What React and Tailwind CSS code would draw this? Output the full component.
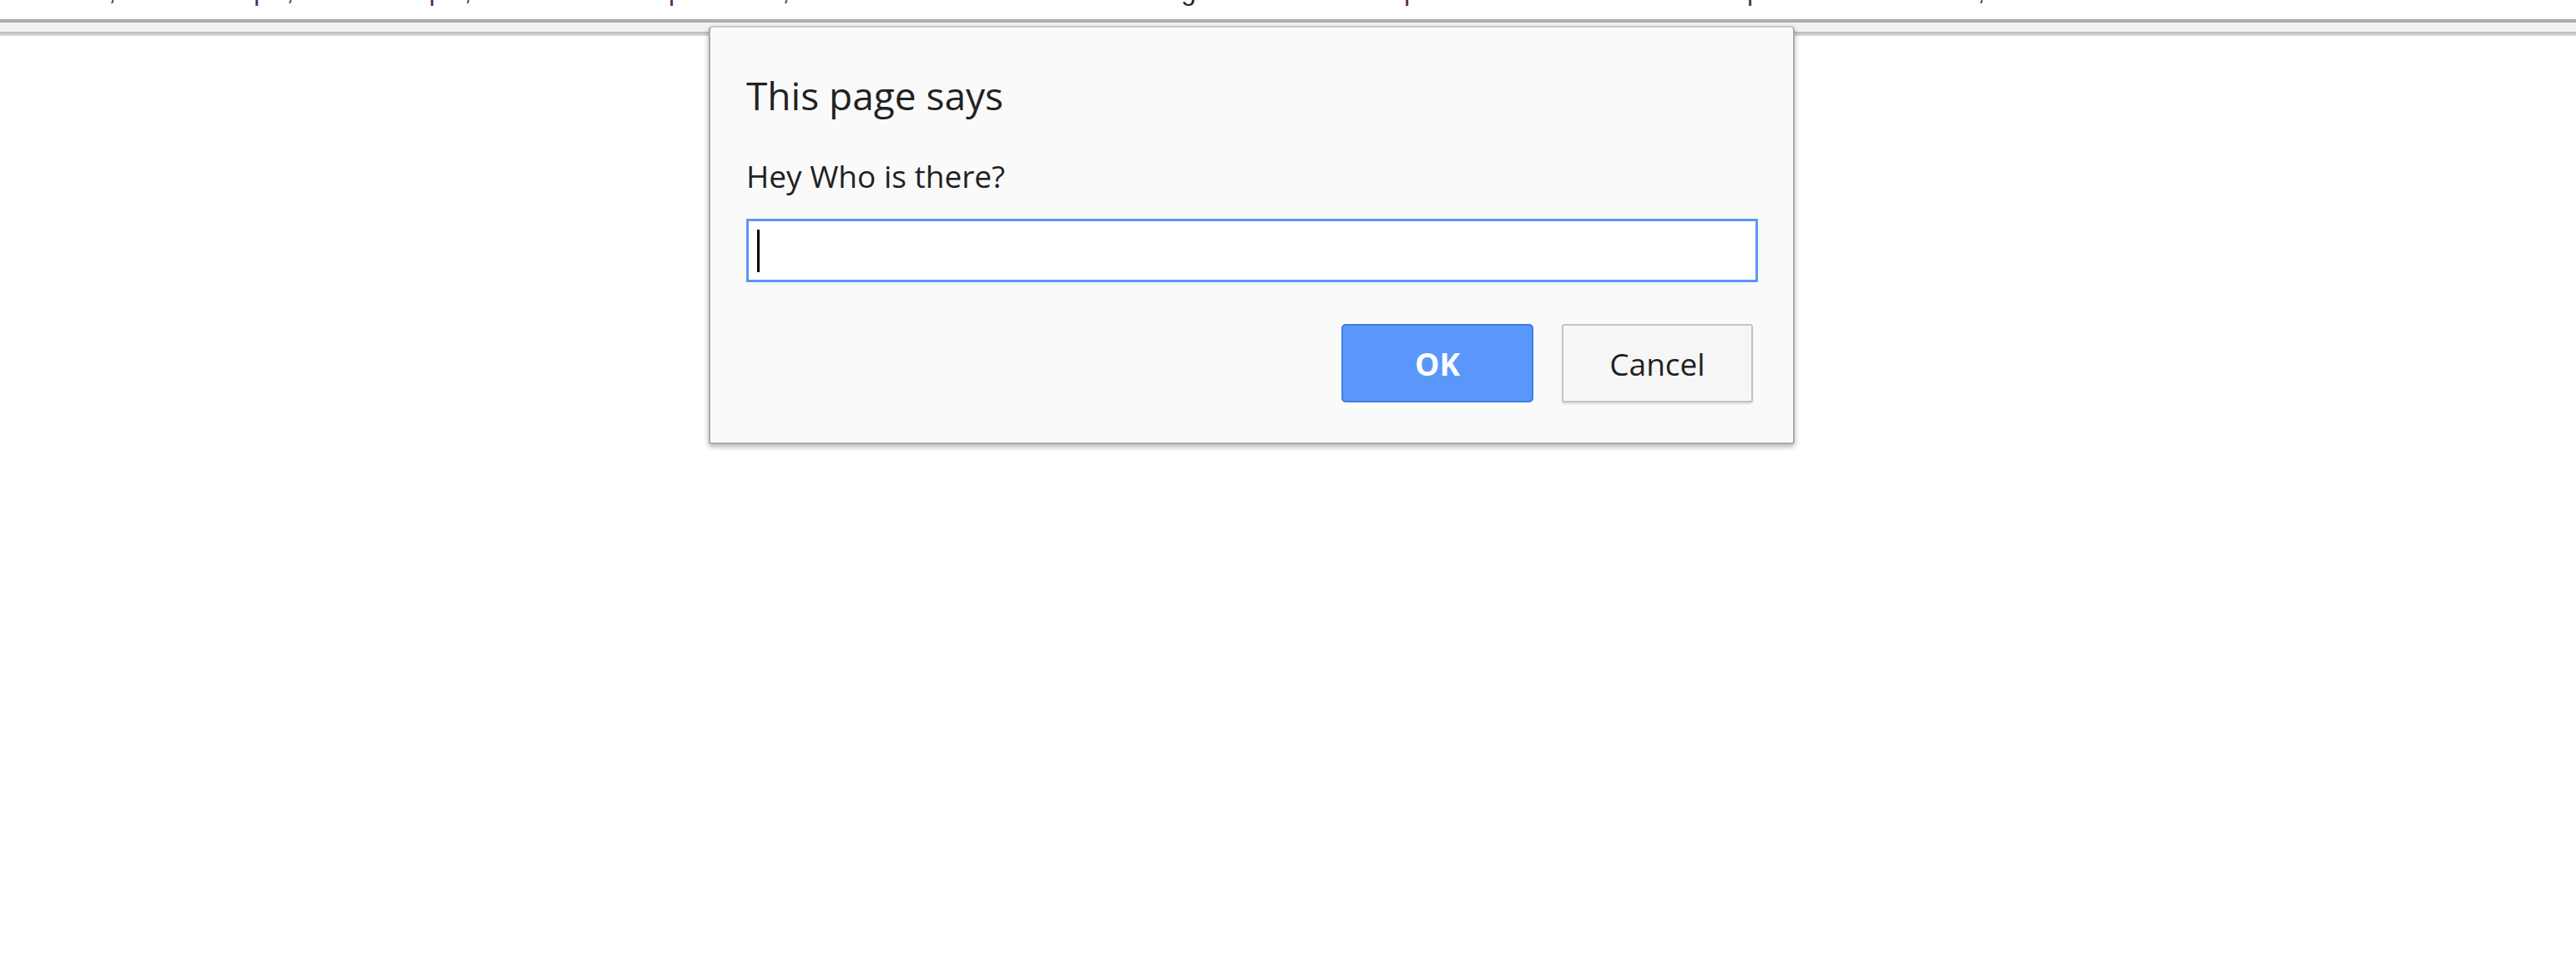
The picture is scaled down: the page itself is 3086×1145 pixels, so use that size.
import React from 'react';

// descender tails of the page text line that is scrolled off above the toolbar
const Tails = () => (
    <div className="h-[23px] overflow-hidden">
        <div className="flex -mt-[27px] text-[32px] leading-none text-[#4b2f52] whitespace-pre" style={{ fontFamily: '"Liberation Sans", Arial, sans-serif' }}>
            <span className="w-[130px] shrink-0"></span>
            <span className="w-[174px] shrink-0">,</span>
            <span className="w-[39px] shrink-0">p</span>
            <span className="w-[171px] shrink-0">,</span>
            <span className="w-[42px] shrink-0">p</span>
            <span className="w-[245px] shrink-0">,</span>
            <span className="w-[136px] shrink-0">p</span>
            <span className="w-[478px] shrink-0">,</span>
            <span className="w-[267px] shrink-0 text-[#222]">g</span>
            <span className="w-[411px] shrink-0">p</span>
            <span className="w-[276px] shrink-0">p</span>
            <span className="shrink-0">,</span>
        </div>
    </div>
);

const PromptDialog = () => (
    <div
        className="absolute left-[849px] top-[31px] w-[1301px] h-[501px] bg-[#fafafa] border-2 border-[#ababab] border-t-[#c9c9c9] rounded-t-[5px] rounded-b-[3px] shadow-[0_3px_6px_rgba(0,0,0,0.3)] flex flex-col pl-[43px] pr-[42px] pt-[58px]"
        style={{ fontFamily: '"Segoe UI", "Open Sans", sans-serif' }}
    >
        <h1 className="text-[46px] leading-[46px] text-[#222]">This page says</h1>
        <p className="mt-[55px] text-[37px] leading-[37px] text-[#222]">Hey Who is there?</p>
        <div className="mt-[33px] h-[76px] bg-white border-[3px] border-[#5b96f6] flex items-center">
            <span className="ml-[10px] w-[3px] h-[51px] bg-black"></span>
        </div>
        <div className="mt-[50px] mr-[6px] flex justify-end gap-[34px]">
            <button className="w-[230px] h-[94px] rounded-[5px] bg-[#5a97fa] border-2 border-[#3f7de6] text-white font-bold text-[37px] leading-none">
                OK
            </button>
            <button className="w-[229px] h-[94px] rounded-[3px] bg-[#f6f6f6] border-2 border-[#c4c4c4] shadow-[0_2px_2px_rgba(0,0,0,0.12)] text-[#222] text-[37px] leading-none">
                Cancel
            </button>
        </div>
    </div>
);

export default function App() {
    return (
        <div className="relative w-[3086px] h-[1145px] bg-white overflow-hidden">
            <Tails />
            <div className="h-[4px] bg-[#adadad]"></div>
            <div className="h-[11px] bg-[#f2f2f2]"></div>
            <div className="h-[5px] bg-gradient-to-b from-[#b9b9b9] to-[#dcdcdc]"></div>
            <PromptDialog />
        </div>
    );
}
